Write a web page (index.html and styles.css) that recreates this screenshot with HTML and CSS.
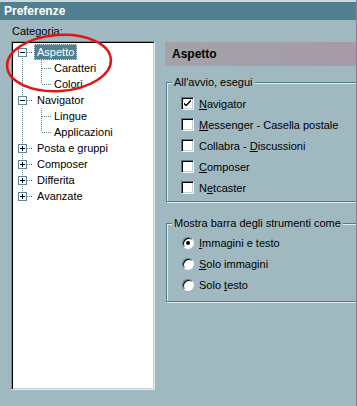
FILE: index.html
```html
<!DOCTYPE html>
<html lang="it">
<head>
    <meta charset="UTF-8">
    <title>Preferenze</title>
    <link rel="stylesheet" href="styles.css">
</head>
<body>
<div class="window">
    <div class="titlebar">Preferenze</div>
    <div class="content">
        <div class="left-col">
            <div class="cat-label">Categoria:</div>
            <div class="tree-box">
                <ul class="tree">
                    <li>
                        <div class="row">
                            <svg class="exp" width="9" height="9" viewBox="0 0 9 9"><rect x="0.5" y="0.5" width="8" height="8" fill="#fff" stroke="#5d8796"/><path d="M2 4.5h5" stroke="#000"/></svg>
                            <span class="stub"></span>
                            <span class="label selected">Aspetto</span>
                        </div>
                        <ul class="kids">
                            <li class="row leaf"><span class="stub"></span><span class="label">Caratteri</span></li>
                            <li class="row leaf"><span class="stub"></span><span class="label">Colori</span></li>
                        </ul>
                    </li>
                    <li>
                        <div class="row">
                            <svg class="exp" width="9" height="9" viewBox="0 0 9 9"><rect x="0.5" y="0.5" width="8" height="8" fill="#fff" stroke="#5d8796"/><path d="M2 4.5h5" stroke="#000"/></svg>
                            <span class="stub"></span>
                            <span class="label">Navigator</span>
                        </div>
                        <ul class="kids">
                            <li class="row leaf"><span class="stub"></span><span class="label">Lingue</span></li>
                            <li class="row leaf"><span class="stub"></span><span class="label">Applicazioni</span></li>
                        </ul>
                    </li>
                    <li>
                        <div class="row">
                            <svg class="exp" width="9" height="9" viewBox="0 0 9 9"><rect x="0.5" y="0.5" width="8" height="8" fill="#fff" stroke="#5d8796"/><path d="M2 4.5h5M4.5 2v5" stroke="#000"/></svg>
                            <span class="stub"></span>
                            <span class="label">Posta e gruppi</span>
                        </div>
                    </li>
                    <li>
                        <div class="row">
                            <svg class="exp" width="9" height="9" viewBox="0 0 9 9"><rect x="0.5" y="0.5" width="8" height="8" fill="#fff" stroke="#5d8796"/><path d="M2 4.5h5M4.5 2v5" stroke="#000"/></svg>
                            <span class="stub"></span>
                            <span class="label">Composer</span>
                        </div>
                    </li>
                    <li>
                        <div class="row">
                            <svg class="exp" width="9" height="9" viewBox="0 0 9 9"><rect x="0.5" y="0.5" width="8" height="8" fill="#fff" stroke="#5d8796"/><path d="M2 4.5h5M4.5 2v5" stroke="#000"/></svg>
                            <span class="stub"></span>
                            <span class="label">Differita</span>
                        </div>
                    </li>
                    <li>
                        <div class="row">
                            <svg class="exp" width="9" height="9" viewBox="0 0 9 9"><rect x="0.5" y="0.5" width="8" height="8" fill="#fff" stroke="#5d8796"/><path d="M2 4.5h5M4.5 2v5" stroke="#000"/></svg>
                            <span class="stub"></span>
                            <span class="label">Avanzate</span>
                        </div>
                    </li>
                </ul>
            </div>
        </div>

        <div class="right-col">
            <div class="panel-head">Aspetto</div>

            <fieldset class="group">
                <legend>All'avvio, esegui</legend>
                <div class="opts">
                    <div class="opt">
                        <span class="check"><svg width="9" height="9" viewBox="0 0 9 9"><path d="M1 3.5l2 2 5-5v2l-5 5-2-2z" fill="#000"/></svg></span>
                        <span><u>N</u>avigator</span>
                    </div>
                    <div class="opt"><span class="check"></span><span><u>M</u>essenger - Casella postale</span></div>
                    <div class="opt"><span class="check"></span><span>Collabra - <u>D</u>iscussioni</span></div>
                    <div class="opt"><span class="check"></span><span><u>C</u>omposer</span></div>
                    <div class="opt"><span class="check"></span><span>N<u>e</u>tcaster</span></div>
                </div>
            </fieldset>

            <fieldset class="group group-bar">
                <legend>Mostra barra degli strumenti come</legend>
                <div class="opts">
                    <div class="opt"><span class="radio on"></span><span><u>I</u>mmagini e testo</span></div>
                    <div class="opt"><span class="radio"></span><span><u>S</u>olo immagini</span></div>
                    <div class="opt"><span class="radio"></span><span>Solo <u>t</u>esto</span></div>
                </div>
            </fieldset>
        </div>
    </div>

    <!-- red marker drawn over the tree -->
    <svg class="marker" width="124" height="70" viewBox="0 0 124 70">
        <ellipse cx="59" cy="35" rx="52" ry="28" transform="rotate(-4 59 35)" fill="none" stroke="#e31414" stroke-width="2.5"/>
    </svg>
</div>
</body>
</html>
```

FILE: styles.css
```css
body {
    margin: 0;
    background-color: #a0b8c0;
    font-family: "Liberation Sans", Arial, sans-serif;
    font-size: 11px;
    color: #000;
    overflow: hidden;
}
.window {
    position: relative;
    width: 356px;
    height: 406px;
    border-right: 1px solid #a8708e;
    overflow: hidden;
}
.titlebar {
    height: 18px;
    border-top: 2px solid #ccd8dc;
    background-color: #508090;
    color: #fff;
    font-weight: bold;
    font-size: 12px;
    line-height: 18px;
    padding-left: 4px;
}
.content {
    display: flex;
    gap: 10px;
    padding-left: 11px;
}
.left-col {
    width: 144px;
    flex-shrink: 0;
    padding-top: 5px;
}
.cat-label {
    line-height: 13px;
    padding-left: 1px;
    margin-bottom: 3px;
}
.tree-box {
    box-sizing: border-box;
    width: 144px;
    height: 349px;
    background-color: #fff;
    border: 1px solid;
    border-color: #6f8f9c #e2eaee #e2eaee #6f8f9c;
    box-shadow: inset 1px 1px 0 #000, inset -1px -1px 0 #c3d0d6;
    padding-top: 2px;
}
ul {
    list-style: none;
    margin: 0;
    padding: 0;
}
.tree {
    background-image: repeating-linear-gradient(to bottom, #5d8796 0 1px, transparent 1px 2px);
    background-repeat: no-repeat;
    background-position: 10px 8px;
    background-size: 1px calc(100% - 16px);
}
.row {
    display: flex;
    align-items: center;
    height: 16px;
    padding-left: 6px;
}
.exp {
    display: block;
    flex-shrink: 0;
}
.stub {
    width: 6px;
    height: 1px;
    flex-shrink: 0;
    background-image: repeating-linear-gradient(to right, #5d8796 0 1px, transparent 1px 2px);
}
.label {
    margin-left: 1px;
    padding: 0 2px;
    line-height: 14px;
    white-space: nowrap;
    border: 1px dotted transparent;
}
.label.selected {
    background-color: #508090;
    color: #fff;
    border-color: #c8d8dc;
}
.kids {
    background-image: repeating-linear-gradient(to bottom, #5d8796 0 1px, transparent 1px 2px);
    background-repeat: no-repeat;
    background-position: 29px 0;
    background-size: 1px calc(100% - 8px);
}
.leaf {
    padding-left: 30px;
}
.leaf .stub {
    width: 9px;
}
.leaf .label {
    margin-left: 0;
}
.right-col {
    flex: 1;
    min-width: 0;
    padding-top: 22px;
}
.panel-head {
    height: 24px;
    line-height: 24px;
    padding-left: 7px;
    font-weight: bold;
    font-size: 12px;
    background: linear-gradient(to right, #a3a2a8, #a59ea6 60%, #a79aa4);
}
.group {
    margin: 10px -8px 0 1px;
    padding: 0;
    min-width: 0;
    border: 1px solid #4f7b8b;
    box-shadow: inset 1px 1px 0 #e2ebee, 1px 1px 0 #e2ebee;
}
.group legend {
    margin-left: 5px;
    padding: 0 2px;
    line-height: 13px;
    background-color: #a0b8c0;
}
.group-bar {
    margin-top: 15px;
}
.opts {
    padding: 4px 0 3px 14px;
}
.group-bar .opts {
    padding-top: 2px;
    padding-bottom: 6px;
}
.opt {
    display: flex;
    align-items: center;
    height: 21px;
    white-space: nowrap;
}
.check {
    box-sizing: border-box;
    width: 13px;
    height: 13px;
    margin-right: 5px;
    display: flex;
    align-items: center;
    justify-content: center;
    background-color: #fff;
    border: 1px solid;
    border-color: #4f7b8b #f4f8f9 #f4f8f9 #4f7b8b;
    box-shadow: inset 1px 1px 0 #000, inset -1px -1px 0 #c3d0d6;
}
.check svg {
    display: block;
}
.radio {
    box-sizing: border-box;
    width: 12px;
    height: 12px;
    margin: 0 5px 0 1px;
    border-radius: 50%;
    background-color: #fff;
    border: 1px solid;
    border-color: #4f7b8b #f4f8f9 #f4f8f9 #4f7b8b;
    box-shadow: inset 1px 1px 0 #000;
    display: flex;
    align-items: center;
    justify-content: center;
}
.radio.on::after {
    content: "";
    width: 4px;
    height: 4px;
    border-radius: 50%;
    background-color: #000;
}
.marker {
    position: absolute;
    left: 0;
    top: 28px;
}
```
